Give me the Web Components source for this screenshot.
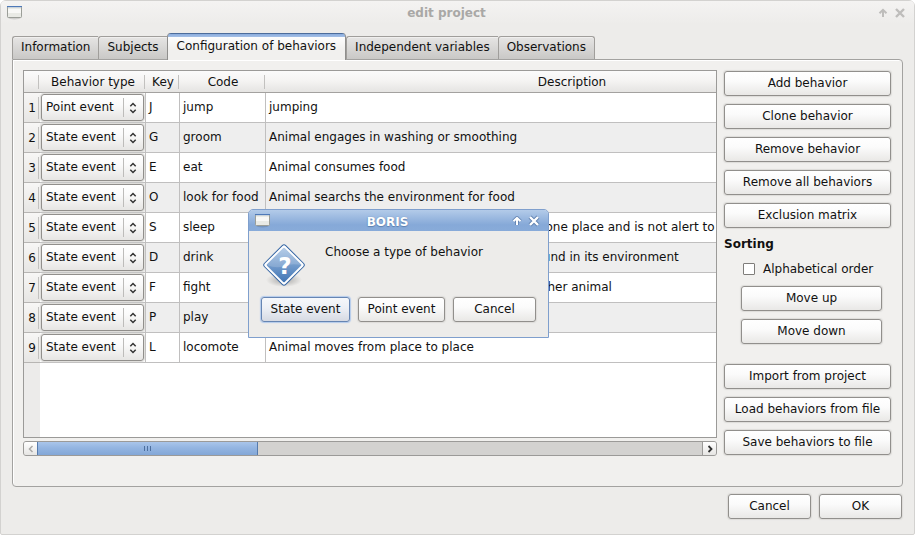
<!DOCTYPE html>
<html lang="en">
<head>
<meta charset="utf-8">
<title>edit project</title>
<style>
  html { background: #fff; }
  body {
    margin: 0;
    font: 12px/16px "DejaVu Sans", Verdana, sans-serif;
    color: #111;
    overflow: hidden;
  }
</style>
</head>
<body>
<project-window>
  <title-bar slot="bar" inactive>edit project</title-bar>
  <tab-strip slot="tabs">
    <tab-item>Information</tab-item>
    <tab-item>Subjects</tab-item>
    <tab-item selected>Configuration of behaviors</tab-item>
    <tab-item>Independent variables</tab-item>
    <tab-item>Observations</tab-item>
  </tab-strip>
  <behavior-table></behavior-table>
  <scroll-track></scroll-track>
  <side-actions slot="side"></side-actions>
  <push-button slot="footer">Cancel</push-button>
  <push-button slot="footer">OK</push-button>
</project-window>
<message-dialog>
  <title-bar slot="bar">BORIS</title-bar>
  Choose a type of behavior
  <push-button slot="actions" primary>State event</push-button>
  <push-button slot="actions">Point event</push-button>
  <push-button slot="actions">Cancel</push-button>
</message-dialog>

<script>
const define = (name, html, setup) => {
  const template = document.createElement('template');
  template.innerHTML = html;
  customElements.define(name, class extends HTMLElement {
    constructor() {
      super();
      this.attachShadow({ mode: 'open' }).append(template.content.cloneNode(true));
      if (setup) setup(this.shadowRoot, this);
    }
  });
};

define('push-button', `
<style>
  :host { display: block; min-width: 83px; }
  button {
    display: block; box-sizing: border-box; width: 100%; height: 25px; padding: 0 7px 2px;
    font: inherit; color: inherit; white-space: nowrap;
    border: 1px solid #918f8c; border-radius: 3px;
    background: linear-gradient(#fff, #fbfbfb 40%, #e9e8e6);
    box-shadow: 0 0 1px 1px #dddcd9;
  }
  :host([primary]) button {
    border-color: #6685b3;
    background: linear-gradient(#f6f8fb, #eceff5 45%, #d6dae3);
    box-shadow: 0 0 1px 1px #b3cbec;
  }
</style>
<button type="button"><slot></slot></button>`);

define('title-bar', `
<style>
  :host {
    display: flex; align-items: center; height: 21px; padding: 0 8px 0 5px;
    color: #fff; font-weight: bold;
    background: linear-gradient(#b3cbe9, #86a9d8 70%, #88abd9);
    border-radius: 4px 4px 0 0;
    --glyph: #fff; --shade: #5f81b0;
  }
  :host([inactive]) {
    height: 23px; color: #a9a8a6; background: linear-gradient(#f4f3f2, #edecea);
    --glyph: #bebdbb; --shade: transparent;
  }
  h1 {
    flex: 1; margin: 0; padding-right: 4px; font: inherit; text-align: center;
    text-shadow: 0 0 1px var(--shade), 0 1px 1px var(--shade);
  }
  :host(:not([inactive])) h1 { padding: 2px 4px 0 0; }
  button { padding: 0; border: 0; background: none; width: 18px; height: 16px; display: grid; place-items: center; }
  button:last-child { width: 12px; margin-left: 2px; }
  svg { display: block; }
</style>
<svg width="17" height="15" viewBox="0 0 17 15">
  <ellipse cx="8.500" cy="13" rx="6" ry="1.500" fill="#000" opacity=".13"/>
  <rect x="1.500" y="1.500" width="14" height="11" rx=".8" fill="#e9eae5" stroke="#9b9e98"/>
  <rect x="2" y="4" width="13" height="4" fill="#f8f8f6"/>
  <rect x="1" y="1" width="15" height="1.200" fill="#4e79b8"/>
</svg>
<h1><slot></slot></h1>
<button type="button" aria-label="Shade"><svg width="10" height="10" viewBox="0 0 10 10"><path d="M5 9V2.200M1.500 5.300 5 1.800l3.500 3.500" fill="none" stroke="var(--shade)" stroke-width="3.600"/><path d="M5 9V2.200M1.500 5.300 5 1.800l3.500 3.500" fill="none" stroke="var(--glyph)" stroke-width="2"/></svg></button>
<button type="button" aria-label="Close"><svg width="12" height="12" viewBox="0 0 12 12"><path d="m2 2 8 8M10 2l-8 8" stroke="var(--shade)" stroke-width="4"/><path d="m2 2 8 8M10 2l-8 8" stroke="var(--glyph)" stroke-width="2.400"/></svg></button>`);

define('tab-item', `
<style>
  :host { display: block; }
  button {
    display: block; height: 23px; padding: 0 8px 2px; font: inherit; color: inherit; white-space: nowrap;
    border: solid #a09e9b; border-width: 1px 0 0 1px; border-radius: 3px 0 0 0;
    background: linear-gradient(#e6e5e4, #c9c8c6);
    box-shadow: inset 0 1px #f0efee;
  }
  :host(:last-child) button { border-right-width: 1px; border-radius: 3px 3px 0 0; }
  :host([selected]) { margin-bottom: -1px; position: relative; }
  :host([selected]) button {
    height: 27px; padding: 0 9px 2px; border: solid #8f8e8c; border-width: 0 1px 0 1px;
    border-radius: 4px 4px 0 0;
    background: linear-gradient(#4c6c9b 1px, #8aacdd 1px, #a5c0e7 4px, #fdfdfd 4px, #f1f0ee 60%);
    box-shadow: none;
  }
</style>
<button type="button" role="tab"><slot></slot></button>`);

define('tab-strip', `
<style>:host { display: flex; align-items: flex-end; height: 27px; }</style>
<slot></slot>`);

define('project-window', `
<style>
  :host {
    display: flex; flex-direction: column; box-sizing: border-box; min-height: 100vh;
    border: 1px solid #d3d2d0; border-radius: 6px 6px 2px 2px; background: #edecea;
  }
  .content { flex: 1; display: flex; flex-direction: column; padding: 8px 11px 15px; }
  .pane {
    flex: 1; display: flex; gap: 7px; padding: 10px 11px 30px 10px;
    border: 1px solid #a3a2a0; border-radius: 0 4px 4px 4px; background: #f1f0ee;
    box-shadow: inset 1px 1px #fff;
  }
  .list { flex: 1; min-width: 0; display: flex; flex-direction: column; gap: 3px; }
  footer { display: flex; justify-content: flex-end; gap: 8px; padding: 7px 1px 0 0; }
</style>
<slot name="bar"></slot>
<div class="content">
  <slot name="tabs"></slot>
  <div class="pane">
    <div class="list"><slot></slot></div>
    <slot name="side"></slot>
  </div>
  <footer><slot name="footer"></slot></footer>
</div>`);

define('event-select', `
<style>
  :host { display: grid; margin: 0 1px; height: 27px; }
  select, svg { grid-area: 1 / 1; }
  select {
    appearance: none; width: 100%; height: 27px; margin: 0; padding: 0 24px 2px 4px;
    font: inherit; color: inherit; border: 1px solid #918f8c; border-radius: 3px;
    background: linear-gradient(#fff, #fafafa 40%, #e6e5e3);
    box-shadow: 0 0 1px 1px #dddcd9;
  }
  svg { justify-self: end; pointer-events: none; }
</style>
<select aria-label="Behavior type"><option>State event</option><option>Point event</option></select>
<svg width="22" height="27" viewBox="0 0 22 27">
  <path d="M1.500 4v19" stroke="#bdbcba"/>
  <path d="m8.300 12.200 2.700-2.700 2.700 2.700M8.300 15.800l2.700 2.700 2.700-2.700" fill="none" stroke="#333" stroke-width="1.500"/>
</svg>`, (root, host) => {
  root.querySelector('select').value = host.getAttribute('value') || 'State event';
});

const behaviors = [
  ['Point event', 'J', 'jump', 'jumping'],
  ['State event', 'G', 'groom', 'Animal engages in washing or smoothing'],
  ['State event', 'E', 'eat', 'Animal consumes food'],
  ['State event', 'O', 'look for food', 'Animal searchs the environment for food'],
  ['State event', 'S', 'sleep', 'Animal beds down and remains motionless in one place and is not alert to'],
  ['State event', 'D', 'drink', 'Animal consumes water or any other liquid found in its environment'],
  ['State event', 'F', 'fight', 'Animal engages in agonistic combat with another animal'],
  ['State event', 'P', 'play', ''],
  ['State event', 'L', 'locomote', 'Animal moves from place to place'],
];

define('behavior-table', `
<style>
  :host {
    display: block; flex: 1; overflow: hidden; border: 1px solid #9b9a98;
    background: linear-gradient(to right, #ecebea 16px, #fff 16px);
  }
  table { table-layout: fixed; width: 854px; border-collapse: separate; border-spacing: 0; }
  .n { width: 16px; } .type { width: 106px; } .key { width: 34px; } .code { width: 86px; }
  th, td { box-sizing: border-box; padding: 0; font-weight: normal; white-space: nowrap; }
  thead th {
    height: 22px; border-bottom: 1px solid #a3a19f;
    background: linear-gradient(#c2c1bf, #c2c1bf) right 1px top 4px / 1px 14px no-repeat,
      linear-gradient(#fbfbfb, #f5f4f3 45%, #e5e4e2);
  }
  td { height: 30px; padding: 0 0 2px 3px; border: solid #c0bfbf; border-width: 0 1px 1px 0; background: #fff; }
  tbody tr:nth-child(even) td { background: #eee; }
  td.pick { padding: 0; }
  tbody th {
    height: 30px; border-bottom: 1px solid #b7b5b3;
    background: linear-gradient(#c2c1bf, #c2c1bf) right 1px top 4px / 1px 22px no-repeat,
      linear-gradient(#f7f6f5, #e7e6e4);
  }
</style>
<table>
  <colgroup><col class="n"><col class="type"><col class="key"><col class="code"><col></colgroup>
  <thead><tr><th></th><th scope="col">Behavior type</th><th scope="col">Key</th><th scope="col">Code</th><th scope="col">Description</th></tr></thead>
  <tbody></tbody>
</table>`, root => {
  root.querySelector('tbody').innerHTML = behaviors.map(([type, key, code, text], i) =>
    `<tr><th scope="row">${i + 1}</th><td class="pick"><event-select value="${type}"></event-select></td><td>${key}</td><td>${code}</td><td>${text}</td></tr>`
  ).join('');
});

define('scroll-track', `
<style>
  :host {
    display: flex; box-sizing: border-box; height: 15px; border: 1px solid #9b9a98; border-radius: 3px;
    background: #d3d2d0; overflow: hidden;
  }
  button { flex: none; width: 14px; padding: 0; border: 0; background: linear-gradient(#fff, #e6e5e3); display: grid; place-items: center; }
  button:first-of-type { width: 13px; }
  button:last-of-type { margin-left: auto; border-left: 1px solid #9b9a98; }
  .thumb {
    width: 32%; box-sizing: border-box; display: grid; place-items: center; margin: -1px 0;
    border: 1px solid #567bad; background: linear-gradient(#a9c5ea, #94b5e1 45%, #83a7d7);
  }
</style>
<button type="button" aria-label="Scroll left"><svg width="6" height="8" viewBox="0 0 6 8"><path d="M4.500 1 1.500 4l3 3" fill="none" stroke="#aaa9a7" stroke-width="1.500"/></svg></button>
<div class="thumb" role="scrollbar" aria-orientation="horizontal" aria-valuenow="0"><svg width="9" height="5" viewBox="0 0 9 5"><path d="M1.500 0v5M4.500 0v5M7.500 0v5" stroke="#4d6f9f"/></svg></div>
<button type="button" aria-label="Scroll right"><svg width="6" height="8" viewBox="0 0 6 8"><path d="m1.500 1 3 3-3 3" fill="none" stroke="#333" stroke-width="1.800"/></svg></button>`);

define('side-actions', `
<style>
  :host { display: flex; flex-direction: column; gap: 8px; flex: none; width: 167px; padding-top: 1px; }
  h2 { margin: 0; font: inherit; font-weight: bold; }
  .sort { display: flex; flex-direction: column; gap: 8px; padding: 0 9px 0 17px; margin-bottom: 12px; }
  label { display: flex; align-items: center; gap: 8px; height: 18px; padding-left: 2px; white-space: nowrap; }
  input {
    appearance: none; flex: none; width: 12px; height: 12px; margin: 0; background: #fff;
    border: 1px solid #7f7d7a; border-radius: 1px;
  }
</style>
<push-button>Add behavior</push-button>
<push-button>Clone behavior</push-button>
<push-button>Remove behavior</push-button>
<push-button>Remove all behaviors</push-button>
<push-button>Exclusion matrix</push-button>
<h2>Sorting</h2>
<div class="sort">
  <label><input type="checkbox">Alphabetical order</label>
  <push-button>Move up</push-button>
  <push-button>Move down</push-button>
</div>
<push-button>Import from project</push-button>
<push-button>Load behaviors from file</push-button>
<push-button>Save behaviors to file</push-button>`);

define('message-dialog', `
<style>
  :host {
    position: absolute; left: 248px; top: 209px; box-sizing: border-box; width: 301px;
    border: 1px solid #7f9fcd; border-radius: 5px 5px 0 0; background: #edecea;
  }
  .message { display: flex; gap: 18px; padding: 13px 14px 0; }
  .message p { margin: 0; }
  .icon { flex: none; }
  .actions { display: grid; grid-template-columns: 89fr 87fr 83fr; gap: 8px; padding: 8px 12px 15px; }
</style>
<slot name="bar"></slot>
<div class="message">
  <svg class="icon" width="44" height="45" viewBox="1 1 44 45" aria-hidden="true">
    <defs>
      <linearGradient id="face" x1="0" y1="0" x2="1" y2="1"><stop offset="0" stop-color="#a9c4e4"/><stop offset="1" stop-color="#3f74b4"/></linearGradient>
      <radialGradient id="shadow"><stop offset="0" stop-opacity=".3"/><stop offset="1" stop-opacity="0"/></radialGradient>
    </defs>
    <ellipse cx="22" cy="37" rx="18" ry="7" fill="url(#shadow)"/>
    <rect x="7" y="7" width="30" height="30" rx="2.500" transform="rotate(45 22 22)" fill="#fff" stroke="#3465a4"/>
    <rect x="9.500" y="9.500" width="25" height="25" rx="1" transform="rotate(45 22 22)" fill="url(#face)"/>
    <path d="M4.500 22 22 4.500 39.500 22 Q29 20 22 23 T4.500 22Z" fill="#fff" opacity=".16"/>
    <text x="23" y="31" text-anchor="middle" font-size="23" font-weight="bold" fill="#fff">?</text>
  </svg>
  <p><slot></slot></p>
</div>
<div class="actions"><slot name="actions"></slot></div>`);
</script>
</body>
</html>
